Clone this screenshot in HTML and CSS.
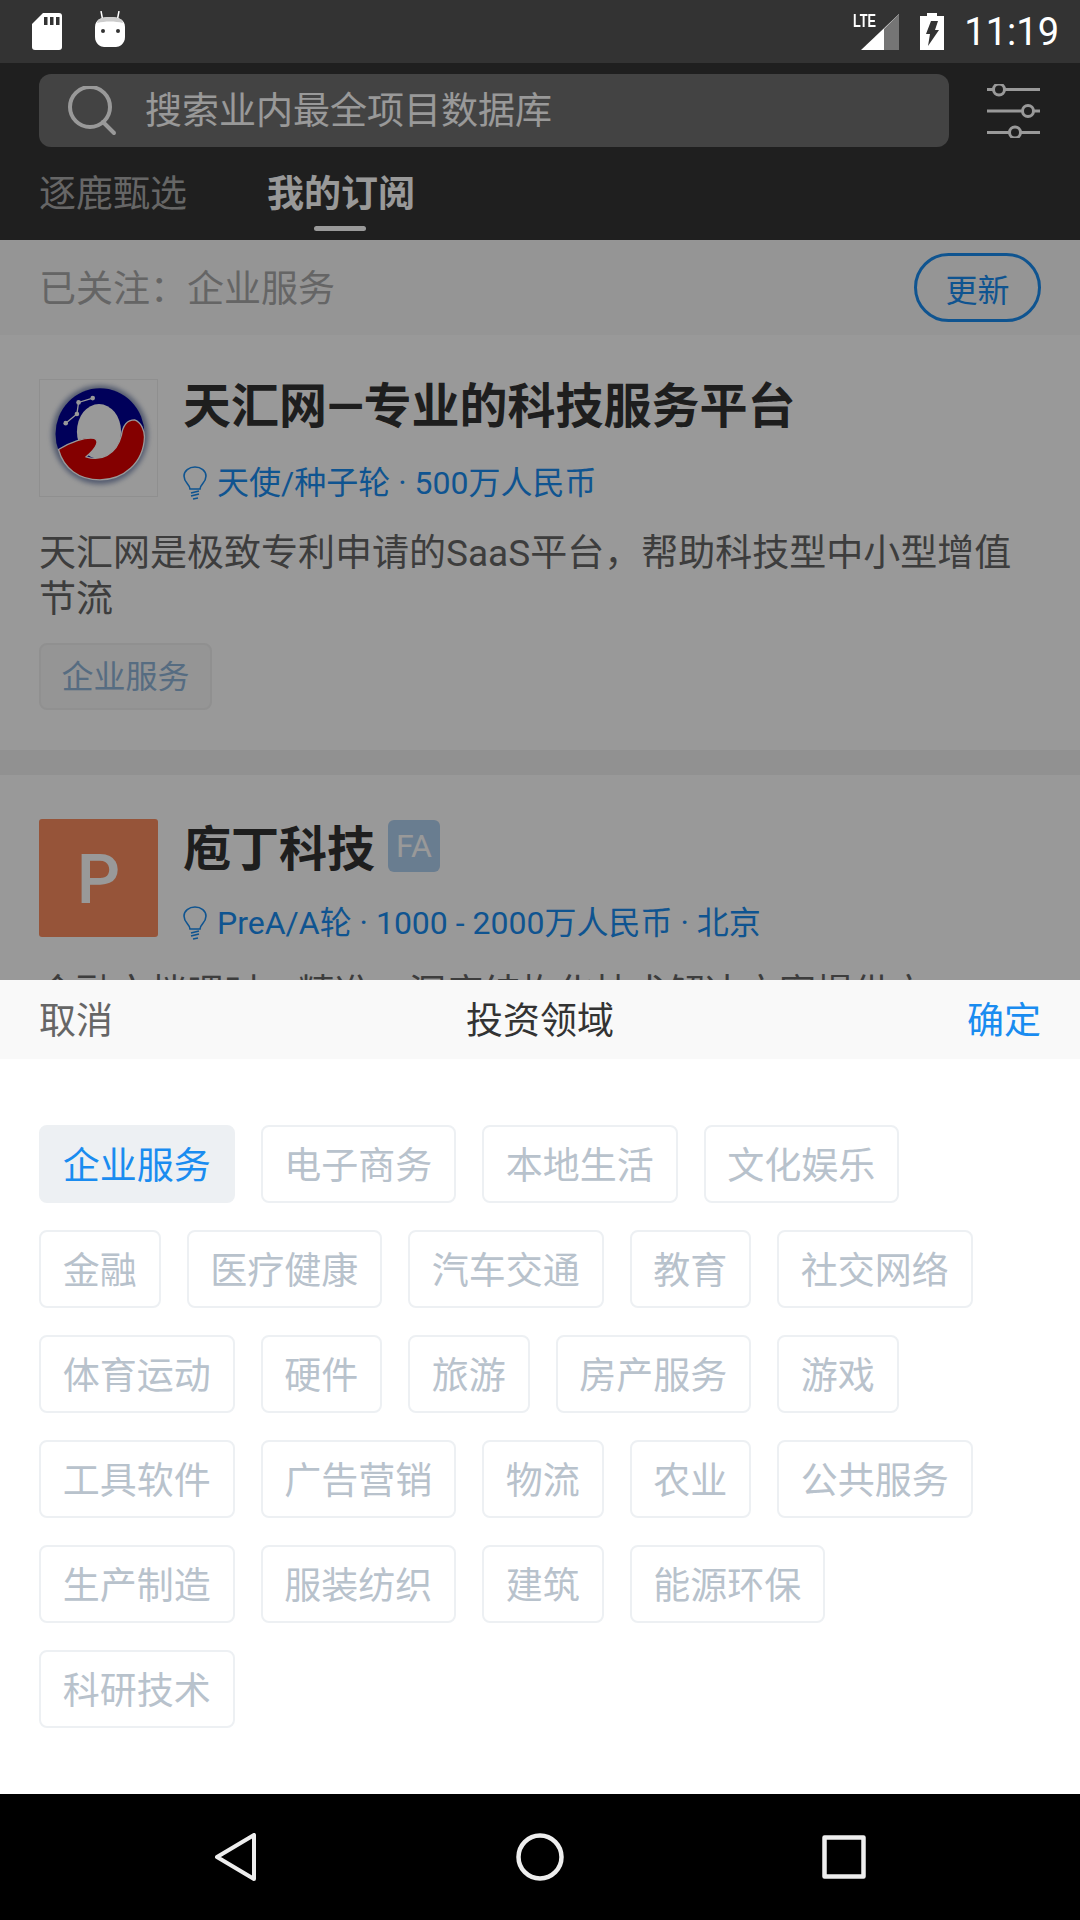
FILE: index.html
```html
<!DOCTYPE html>
<html lang="zh">
<head>
<meta charset="UTF-8">
<meta name="viewport" content="width=device-width, initial-scale=1.0">
<title>投资领域</title>
<link rel="stylesheet" href="styles.css">
</head>
<body>

<div class="statusBar">
    <div class="statusLeft">
        <svg width="30" height="37" viewBox="0 0 30 37"><path d="M11 0h16a3 3 0 0 1 3 3v31a3 3 0 0 1-3 3H3a3 3 0 0 1-3-3V11z" fill="#fff"/><path d="M12 4h3.500v8H12zM18 4h3.500v8H18zM24 4h3.500v8H24z" fill="#333"/></svg>
        <svg class="droid" width="30" height="36" viewBox="0 0 30 36"><path d="M6 0l1.500 8M24 0l-1.500 8" stroke="#fff" stroke-width="1.500"/><path d="M0 16c0-7 6-10 15-10s15 3 15 10v10c0 7-6 10-9 10H9c-3 0-9-3-9-10z" fill="#fff"/><path d="M3 9c4-4 20-4 24 0l1 3c-8-2-18-2-26 0z" fill="#ccc"/><circle cx="8" cy="20" r="2" fill="#333"/><circle cx="23" cy="20" r="2" fill="#333"/></svg>
    </div>
    <div class="statusRight">
        <svg width="38" height="36" viewBox="0 0 38 36"><path d="M38 0v36H0z" fill="#fff"/><path d="M38 0v36H23V15z" fill="#757575"/></svg>
        <span class="lte">LTE</span>
        <svg class="battery" width="24" height="37" viewBox="0 0 24 37"><path d="M7 0h10v3h7v34H0V3h7z" fill="#fff"/><path d="M11 8h7l-3 9h4L8 33l2-12H6z" fill="#333"/></svg>
        <span class="clock">11:19</span>
    </div>
</div>

<div class="screen">
    <div class="header">
        <div class="searchRow">
            <div class="searchBox">
                <svg width="50" height="50" viewBox="0 0 50 50" fill="none" stroke="#fff" stroke-width="4"><circle cx="22" cy="21" r="20"/><path d="M35 36l11 11" stroke-linecap="round"/></svg>
                <span class="searchText">搜索业内最全项目数据库</span>
            </div>
            <svg class="filterIcon" width="53" height="54" viewBox="0 0 53 54" fill="none" stroke="#fff" stroke-width="3"><path d="M0 5.500h6M18 5.500h35M0 27h35M47 27h6M0 48.500h22M34 48.500h19"/><circle cx="12" cy="5.500" r="5.500"/><circle cx="41" cy="27" r="5.500"/><circle cx="28" cy="48.500" r="5.500"/></svg>
        </div>
        <div class="tabs">
            <div class="tab">逐鹿甄选</div>
            <div class="tab tabActive">我的订阅</div>
        </div>
    </div>

    <div class="followBar">
        <span class="followText">已关注：企业服务</span>
        <button class="updateBtn">更新</button>
    </div>

    <div class="card">
        <div class="cardTop">
            <div class="logo">
                <svg width="117" height="116" viewBox="58 28 355 350">
                    <defs>
                        <filter id="soft" x="-20%" y="-20%" width="140%" height="140%"><feGaussianBlur stdDeviation="8"/></filter>
                        <filter id="softer" x="-5%" y="-5%" width="110%" height="110%"><feGaussianBlur stdDeviation="2"/></filter>
                    </defs>
                    <ellipse cx="240" cy="193" rx="146" ry="150" fill="#5a6c9c" opacity=".7" filter="url(#soft)"/>
                    <g filter="url(#softer)">
                        <ellipse cx="240" cy="191" rx="135" ry="139" fill="#000096"/>
                        <ellipse cx="237" cy="183" rx="67" ry="83" fill="#fff"/>
                        <path d="M114 238C150 215 195 200 222 204c16 6 12 26-24 56 42 15 92-5 107-65 5-35 20-47 40-47 20 7 30 32 30 52-3 80-65 130-135 130-65 0-110-35-126-92z" fill="#dc0000" stroke="#fff" stroke-width="4"/>
                    </g>
                    <path d="M136 158l34-28 5-35 43-13" fill="none" stroke="#fff" stroke-width="4"/>
                    <circle cx="136" cy="158" r="7" fill="#fff"/><circle cx="170" cy="130" r="7" fill="#fff"/><circle cx="175" cy="95" r="7" fill="#fff"/><circle cx="218" cy="82" r="7" fill="#fff"/>
                </svg>
            </div>
            <div class="cardInfo">
                <div class="cardTitle">天汇网—专业的科技服务平台</div>
                <div class="cardMeta">
                    <svg width="24" height="34" viewBox="0 0 24 34" fill="none" stroke="#1a8cf0" stroke-width="1.600"><path d="M7 23c0-5-6-6-6-13a11 9 0 0 1 22 0c0 7-6 8-6 13z"/><path d="M8 27l8-2M8 30l8-2M10 33l5-1"/></svg>
                    <span>天使/种子轮 · 500万人民币</span>
                </div>
            </div>
        </div>
        <p class="cardDesc">天汇网是极致专利申请的SaaS平台，帮助科技型中小型增值节流</p>
        <span class="cardTag">企业服务</span>
    </div>

    <div class="card cardSecond">
        <div class="cardTop">
            <div class="logo logoLetter">P</div>
            <div class="cardInfo">
                <div class="cardTitle">庖丁科技<span class="faBadge">FA</span></div>
                <div class="cardMeta">
                    <svg width="24" height="34" viewBox="0 0 24 34" fill="none" stroke="#1a8cf0" stroke-width="1.600"><path d="M7 23c0-5-6-6-6-13a11 9 0 0 1 22 0c0 7-6 8-6 13z"/><path d="M8 27l8-2M8 30l8-2M10 33l5-1"/></svg>
                    <span>PreA/A轮 · 1000 - 2000万人民币 · 北京</span>
                </div>
            </div>
        </div>
        <p class="cardDesc">金融文档喂时，精准，深度结构化技术解决方案提供方</p>
    </div>

    <div class="scrim"></div>

    <div class="sheet">
        <div class="sheetHead">
            <span class="cancel">取消</span>
            <span class="sheetTitle">投资领域</span>
            <span class="confirm">确定</span>
        </div>
        <div class="tagGrid">
            <span class="tag tagOn">企业服务</span>
            <span class="tag">电子商务</span>
            <span class="tag">本地生活</span>
            <span class="tag">文化娱乐</span>
            <span class="tag">金融</span>
            <span class="tag">医疗健康</span>
            <span class="tag">汽车交通</span>
            <span class="tag">教育</span>
            <span class="tag">社交网络</span>
            <span class="tag">体育运动</span>
            <span class="tag">硬件</span>
            <span class="tag">旅游</span>
            <span class="tag">房产服务</span>
            <span class="tag">游戏</span>
            <span class="tag">工具软件</span>
            <span class="tag">广告营销</span>
            <span class="tag">物流</span>
            <span class="tag">农业</span>
            <span class="tag">公共服务</span>
            <span class="tag">生产制造</span>
            <span class="tag">服装纺织</span>
            <span class="tag">建筑</span>
            <span class="tag">能源环保</span>
            <span class="tag">科研技术</span>
        </div>
    </div>
</div>

<div class="navBar">
    <svg width="42" height="48" viewBox="0 0 42 48" fill="none" stroke="#eee" stroke-width="4" stroke-linejoin="round"><path d="M39 2v44L2 24z"/></svg>
    <svg width="48" height="48" viewBox="0 0 48 48" fill="none" stroke="#eee" stroke-width="4.500"><circle cx="24" cy="24" r="21.500"/></svg>
    <svg width="44" height="44" viewBox="0 0 44 44" fill="none" stroke="#eee" stroke-width="4.500" stroke-linejoin="round"><rect x="2.500" y="2.500" width="39" height="39"/></svg>
</div>

</body>
</html>
```

FILE: styles.css
```css
* {
    box-sizing: border-box;
}
html, body {
    margin: 0;
    padding: 0;
}
body {
    width: 1080px;
    height: 1920px;
    display: flex;
    flex-direction: column;
    overflow: hidden;
    font-family: Roboto, "Noto Sans CJK SC", sans-serif;
    background: #fff;
}
svg {
    display: block;
    flex-shrink: 0;
}

/* status bar */
.statusBar {
    height: 63px;
    background: #333;
    display: flex;
    justify-content: space-between;
    align-items: center;
    padding: 0 21px 0 32px;
    flex-shrink: 0;
}
.statusLeft, .statusRight {
    display: flex;
    align-items: center;
}
.statusLeft {
    gap: 33px;
}
.droid {
    margin-bottom: 5px;
}
.statusRight {
    position: relative;
}
.lte {
    position: absolute;
    left: -8px;
    top: 1px;
    font-family: "Liberation Sans", sans-serif;
    font-size: 19px;
    line-height: 16px;
    font-weight: bold;
    color: #fff;
    transform: scaleX(.67);
    transform-origin: left;
}
.battery {
    margin-left: 21px;
}
.clock {
    margin-left: 20px;
    font-size: 38px;
    line-height: 40px;
    color: #fff;
}

/* page under the sheet */
.screen {
    position: relative;
    flex: 1;
    overflow: hidden;
    background: #f2f2f2;
}
.header {
    height: 177px;
    background: #343434;
    padding: 11px 39px 0;
}
.searchRow {
    display: flex;
    align-items: center;
    justify-content: space-between;
}
.searchBox {
    width: 910px;
    height: 73px;
    background: #707070;
    border-radius: 12px;
    display: flex;
    align-items: center;
    padding-left: 29px;
    gap: 27px;
    color: #fff;
    font-size: 37px;
}
.searchText {
    margin-bottom: 5px;
}
.filterIcon {
    margin-right: 1px;
}
.tabs {
    display: flex;
    gap: 80px;
    margin-top: 20px;
}
.tab {
    position: relative;
    font-size: 37px;
    line-height: 56px;
    color: #aaa;
}
.tabActive {
    color: #fff;
    font-weight: 700;
}
.tabActive::after {
    content: "";
    position: absolute;
    left: 47px;
    bottom: -8px;
    width: 52px;
    height: 5px;
    border-radius: 3px;
    background: #fff;
}
.followBar {
    height: 95px;
    background: #f8f8f8;
    display: flex;
    align-items: center;
    justify-content: space-between;
    padding: 0 39px;
    font-size: 37px;
    color: #a9a9a9;
}
.followText {
    margin-bottom: 4px;
}
.updateBtn {
    width: 127px;
    height: 69px;
    background: none;
    border: 3px solid #1a8cf0;
    border-radius: 35px;
    padding: 0;
    font-family: inherit;
    font-size: 32px;
    color: #1a8cf0;
}
.card {
    background: #fff;
    height: 415px;
    padding: 44px 39px 0;
}
.cardSecond {
    margin-top: 25px;
}
.cardTop {
    display: flex;
    gap: 25px;
}
.logo {
    width: 119px;
    height: 118px;
    border: 1px solid #eee;
    display: flex;
    align-items: center;
    justify-content: center;
    flex-shrink: 0;
}
.logoLetter {
    background: #fa8d60;
    border-radius: 3px;
    border: 0;
    padding-top: 3px;
    color: #fff;
    font-size: 68px;
    font-weight: 500;
}
.cardTitle {
    display: flex;
    align-items: center;
    height: 46px;
    font-size: 48px;
    font-weight: 700;
    color: #333;
}
.cardMeta {
    display: flex;
    align-items: center;
    gap: 10px;
    margin-top: 36px;
    font-size: 32px;
    line-height: 44px;
    color: #1a8cf0;
}
.cardSecond .cardTitle {
    margin-top: 3px;
}
.cardSecond .cardMeta {
    margin-top: 33px;
}
.faBadge {
    width: 52px;
    height: 52px;
    margin: 2px 0 0 13px;
    border-radius: 6px;
    background: #b0d0f0;
    color: #fff;
    font-size: 32px;
    font-weight: 400;
    display: flex;
    align-items: center;
    justify-content: center;
}
.cardDesc {
    margin: 26px 0 0;
    font-size: 37px;
    line-height: 46px;
    color: #666;
}
.cardTag {
    display: inline-block;
    margin-top: 20px;
    height: 67px;
    line-height: 65px;
    padding: 0 20.500px;
    font-size: 32px;
    color: #8fb4d8;
    background: #f8f8f8;
    border: 2px solid #f0f0f0;
    border-radius: 8px;
}
.scrim {
    position: absolute;
    inset: 0;
    background: rgba(0, 0, 0, .4);
}

/* bottom sheet */
.sheet {
    position: absolute;
    left: 0;
    right: 0;
    bottom: 0;
    height: 814px;
    background: #fff;
}
.sheetHead {
    height: 79px;
    background: #f9f9f9;
    display: flex;
    align-items: center;
    justify-content: space-between;
    padding: 0 39px 4px;
    font-size: 37px;
}
.cancel {
    color: #666;
}
.sheetTitle {
    color: #333;
}
.confirm {
    color: #1a8cf0;
}
.tagGrid {
    display: flex;
    flex-wrap: wrap;
    gap: 27px 26px;
    padding: 66px 39px 0;
}
.tag {
    height: 78px;
    line-height: 74px;
    padding: 3px 21.750px 0;
    font-size: 37px;
    color: #b8c2cc;
    border: 2px solid #edf0f3;
    border-radius: 8px;
}
.tagOn {
    color: #1a8cf0;
    background: #edf0f3;
}

/* nav bar */
.navBar {
    height: 126px;
    background: #000;
    flex-shrink: 0;
    display: flex;
    align-items: center;
    justify-content: space-between;
    padding: 0 214px 0 215px;
}
```
